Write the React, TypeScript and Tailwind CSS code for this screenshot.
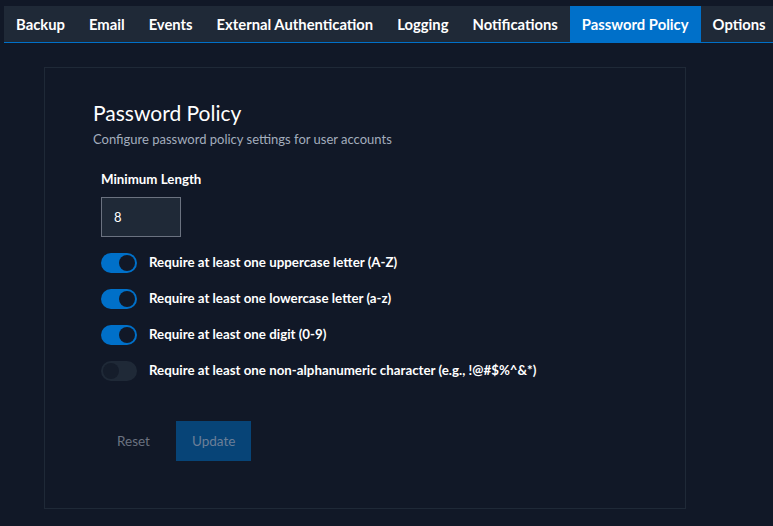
import { useState } from 'react';

const tabs = ['Backup', 'Email', 'Events', 'External Authentication', 'Logging', 'Notifications', 'Password Policy', 'Options'];

const rules = [
  { key: 'upper', label: 'Require at least one uppercase letter (A-Z)', on: true },
  { key: 'lower', label: 'Require at least one lowercase letter (a-z)', on: true },
  { key: 'digit', label: 'Require at least one digit (0-9)', on: true },
  { key: 'special', label: 'Require at least one non-alphanumeric character (e.g., !@#$%^&*)', on: false },
];

function Toggle({ on, onClick }: { on: boolean; onClick: () => void }) {
  return (
    <button
      onClick={onClick}
      className={`flex items-center w-9 h-5 rounded-full p-0.5 ${on ? 'bg-[#0070c9] justify-end' : 'bg-[#1f2937] justify-start'}`}
    >
      <span className={`w-4 h-4 rounded-full ${on ? 'bg-[#111827]' : 'bg-[#151d2b]'}`} />
    </button>
  );
}

export default function App() {
  const [values, setValues] = useState<Record<string, boolean>>(
    Object.fromEntries(rules.map(r => [r.key, r.on]))
  );
  const [active, setActive] = useState('Password Policy');

  return (
    <div className="min-h-screen w-[773px] h-[526px] overflow-hidden bg-[#111827] pt-1.5 pl-1 text-white" style={{ fontFamily: 'Lato, "Noto Sans", sans-serif' }}>
      {/* Tabs */}
      <div className="flex h-[37px] bg-[#1f2937] border-b border-[#0070c9]">
        {tabs.map(t => (
          <button
            key={t}
            onClick={() => setActive(t)}
            className={`px-3 text-[14.8px] font-bold whitespace-nowrap ${active === t ? 'bg-[#0070c9]' : ''}`}
          >
            {t}
          </button>
        ))}
      </div>

      {/* Card */}
      <div className="ml-10 mt-6 w-[642px] h-[442px] border border-[#1f2937] pt-[30px] pl-12">
        <h1 className="text-[21px] leading-[30px] text-white">Password Policy</h1>
        <p className="text-[13px] leading-5 mt-px text-[#a3adbd]">Configure password policy settings for user accounts</p>

        <div className="pl-2 mt-5">
          <label className="block text-[13.3px] font-bold leading-5">Minimum Length</label>
          <input
            defaultValue="8"
            className="mt-2 w-20 h-10 px-3 bg-[#1f2937] border border-[#6b7280] text-[13px] text-white outline-none"
          />

          <div className="flex flex-col gap-4 mt-4">
            {rules.map(r => (
              <div key={r.key} className="flex items-center gap-3">
                <Toggle on={values[r.key]} onClick={() => setValues(v => ({ ...v, [r.key]: !v[r.key] }))} />
                <span className="text-[13.3px] font-bold">{r.label}</span>
              </div>
            ))}
          </div>

          <div className="flex mt-10">
            <button className="h-10 px-4 text-[13.5px] text-[#6b7280]">Reset</button>
            <button className="h-10 px-4 ml-2.5 text-[13.5px] bg-[#074477] text-[#6b7f97]">Update</button>
          </div>
        </div>
      </div>
    </div>
  );
}
